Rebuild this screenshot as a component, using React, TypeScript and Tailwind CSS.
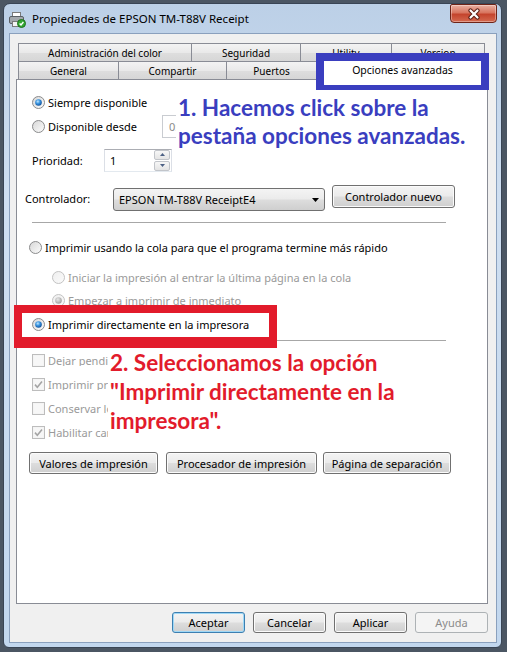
import React from 'react';

const ui = "font-['Noto_Sans',sans-serif] text-[11px] leading-none";
const btnBg =
  'bg-[linear-gradient(to_bottom,#f4f4f4_0%,#ebebeb_48%,#dddddd_52%,#cfcfcf_100%)]';

function Radio({ checked = false, disabled = false }: { checked?: boolean; disabled?: boolean }) {
  return (
    <svg width="13" height="13" viewBox="0 0 13 13" className="shrink-0">
      <circle
        cx="6.5"
        cy="6.5"
        r="6"
        fill={disabled ? 'url(#rbgd)' : 'url(#rbg)'}
        stroke={disabled ? '#c2c2c2' : '#8a8b8c'}
      />
      {checked && <circle cx="6.5" cy="6.5" r="3.3" fill={disabled ? 'url(#rdotd)' : 'url(#rdot)'} />}
    </svg>
  );
}

function Check({ checked = false }: { checked?: boolean }) {
  return (
    <svg width="13" height="13" viewBox="0 0 13 13" className="shrink-0">
      <rect x="0.5" y="0.5" width="12" height="12" fill="#f4f4f4" stroke="#bdbdbd" />
      <rect x="2" y="2" width="9" height="9" fill="#f7f7f7" />
      {checked && <path d="M3 6.6 L5.3 9.2 L10 3.4" stroke="#a5a5a5" strokeWidth="1.6" fill="none" />}
    </svg>
  );
}

function Btn({
  children,
  w,
  focused = false,
  disabled = false,
  h = 'h-[22px]',
}: {
  children: React.ReactNode;
  w: string;
  focused?: boolean;
  disabled?: boolean;
  h?: string;
}) {
  const look = disabled
    ? 'border-[#adb2b5] bg-[#f4f4f4] text-[#8b8b8b]'
    : focused
      ? `border-[#3c7fb1] shadow-[inset_0_0_0_1px_#9fd8f6] ${btnBg} text-black`
      : `border-[#707070] shadow-[inset_0_0_0_1px_#fbfbfb] ${btnBg} text-black`;
  return (
    <div className={`${w} ${h} shrink-0 rounded-[3px] border ${look} flex items-center justify-center ${ui}`}>
      {children}
    </div>
  );
}

function Tab({ label, w, first = false }: { label: string; w: string; first?: boolean }) {
  return (
    <div
      className={`${w} h-[18px] ${first ? '' : '-ml-px'} border-x border-t border-[#898c95] bg-[linear-gradient(to_bottom,#f3f3f3,#e9e9e9_50%,#dedede_51%,#d6d6d6)] flex items-center justify-center font-['Noto_Sans',sans-serif] text-[10px] leading-none text-black`}
    >
      {label}
    </div>
  );
}

function PrinterIcon() {
  return (
    <svg width="17" height="16" viewBox="0 0 17 16" className="mt-[3px] shrink-0">
      <rect x="3.5" y="0.5" width="8" height="5" fill="#fff" stroke="#7a7a7a" />
      <rect x="0.5" y="4.5" width="14" height="7" rx="1.5" fill="#a4a9ae" stroke="#5b6066" />
      <rect x="3.5" y="9.5" width="8" height="5" fill="#f4f4f4" stroke="#7a7a7a" />
      <circle cx="12.5" cy="11.5" r="4" fill="#32a832" stroke="#1d6f1d" />
      <path d="M10.6 11.4 L12 12.9 L14.4 10" stroke="#fff" strokeWidth="1.4" fill="none" />
    </svg>
  );
}

function CloseButton() {
  return (
    <div className="absolute right-[4px] top-0 w-[47px] h-[19px] rounded-b-[4px] rounded-t-[2px] border border-[#6e2418] bg-[linear-gradient(to_bottom,#eab0a2,#d8755f_45%,#c4442d_55%,#d46a50)] shadow-[inset_0_0_0_1px_rgba(255,255,255,0.35)] flex items-center justify-center">
      <svg width="14" height="12" viewBox="0 0 14 12">
        <path d="M3.5 2.5 L10.5 9.5 M10.5 2.5 L3.5 9.5" stroke="#5a1d14" strokeWidth="4.2" strokeLinecap="round" />
        <path d="M3.5 2.5 L10.5 9.5 M10.5 2.5 L3.5 9.5" stroke="#fff" strokeWidth="2.2" strokeLinecap="round" />
      </svg>
    </div>
  );
}

export default function App() {
  return (
    <div className="relative w-[507px] h-[652px] overflow-hidden bg-[#4b5663]">
      <svg className="absolute w-0 h-0">
        <defs>
          <linearGradient id="rbg" x1="0" y1="0" x2="1" y2="1">
            <stop offset="0" stopColor="#d6d6d6" />
            <stop offset="1" stopColor="#fdfdfd" />
          </linearGradient>
          <linearGradient id="rbgd" x1="0" y1="0" x2="1" y2="1">
            <stop offset="0" stopColor="#eeeeee" />
            <stop offset="1" stopColor="#fbfbfb" />
          </linearGradient>
          <radialGradient id="rdot" cx="0.4" cy="0.35" r="0.7">
            <stop offset="0" stopColor="#bfe7ff" />
            <stop offset="0.45" stopColor="#3a95e0" />
            <stop offset="1" stopColor="#0c4a94" />
          </radialGradient>
          <radialGradient id="rdotd" cx="0.4" cy="0.35" r="0.7">
            <stop offset="0" stopColor="#e8e8e8" />
            <stop offset="1" stopColor="#9c9c9c" />
          </radialGradient>
        </defs>
      </svg>

      {/* Window */}
      <div className="ml-[3px] mt-[3px] w-[499px] h-[645px] rounded-t-[7px] rounded-b-[6px] border border-[#394555] bg-[linear-gradient(to_bottom,#bcd0e7,#cfdff1_30%,#c2d7ee)] flex flex-col">
        {/* Title bar */}
        <div className="relative h-[29px] shrink-0 flex items-center pl-[5px]">
          <PrinterIcon />
          <span className="ml-[6px] font-['Noto_Sans',sans-serif] text-[11.5px] leading-none text-black">
            Propiedades de EPSON TM-T88V Receipt
          </span>
          <CloseButton />
        </div>

        {/* Client area */}
        <div className="ml-[5px] mr-[4px] h-[610px] border border-[#8aa0bd] bg-[#f0f0f0] flex flex-col">
          {/* Tabs */}
          <div className="ml-[8px] mt-[9px] flex flex-col">
            <div className="flex">
              <Tab first label="Administración del color" w="w-[174px]" />
              <Tab label="Seguridad" w="w-[110px]" />
              <Tab label="Utility" w="w-[92px]" />
              <Tab label="Version" w="w-[94px]" />
            </div>
            <div className="flex items-start h-[18px]">
              <Tab first label="General" w="w-[101px]" />
              <Tab label="Compartir" w="w-[109px]" />
              <Tab label="Puertos" w="w-[91px]" />
              <div className="relative z-10 -ml-px -mt-[2px] w-[173px] h-[21px] border-x border-t border-[#898c95] bg-white flex items-center justify-center font-['Noto_Sans',sans-serif] text-[10.5px] leading-none text-black">
                Opciones avanzadas
              </div>
            </div>
          </div>

          {/* Panel */}
          <div className={`ml-[6px] w-[472px] h-[525px] shrink-0 border border-[#898c95] bg-white flex flex-col ${ui} text-black`}>
            <div className="mt-[12px] h-[20px] ml-[15px] flex items-center gap-[3px]">
              <Radio checked />
              <span>Siempre disponible</span>
            </div>
            <div className="mt-[2px] h-[24px] ml-[15px] flex items-center">
              <Radio />
              <span className="ml-[3px] w-[114px]">Disponible desde</span>
              <div className="w-[14px] h-[23px] border border-r-0 border-[#c9ccd1] bg-white flex items-center pl-[6px] text-[#8a8a8a] overflow-hidden">
                0:
              </div>
            </div>
            <div className="mt-[10px] h-[24px] ml-[15px] flex items-center">
              <span className="w-[72px]">Prioridad:</span>
              <div className="w-[68px] h-[23px] border border-[#abadb3] border-x-[#dbdfe6] border-b-[#e3e9ef] bg-white flex items-center">
                <span className="flex-1 pl-[5px]">1</span>
                <div className="mr-px w-[16px] h-[21px] flex flex-col gap-px">
                  {[0, 1].map((i) => (
                    <div
                      key={i}
                      className="flex-1 rounded-[2px] border border-[#c2c5ca] bg-[linear-gradient(to_bottom,#f7f7f7,#e4e4e4)] flex items-center justify-center"
                    >
                      <svg width="5" height="3" viewBox="0 0 5 3">
                        <path d={i === 0 ? 'M0 3 L2.5 0 L5 3 Z' : 'M0 0 L2.5 3 L5 0 Z'} fill="#4d6185" />
                      </svg>
                    </div>
                  ))}
                </div>
              </div>
            </div>
            <div className="mt-[13px] h-[26px] ml-[8px] flex items-start">
              <span className="w-[88px] h-[26px] flex items-center">Controlador:</span>
              <div className={`mt-[3px] w-[212px] h-[23px] rounded-[3px] border border-[#707070] ${btnBg} flex items-center pl-[5px] pr-[5px]`}>
                <span className="flex-1">EPSON TM-T88V ReceiptE4</span>
                <svg width="7" height="4" viewBox="0 0 7 4">
                  <path d="M0 0 L7 0 L3.5 4 Z" fill="#000" />
                </svg>
              </div>
              <div className="ml-[7px]">
                <Btn w="w-[123px]" h="h-[23px]">
                  Controlador nuevo
                </Btn>
              </div>
            </div>
            <div className="mt-[11px] ml-[15px] w-[414px] h-px bg-[#a7a7a7]" />

            <div className="mt-[14px] h-[20px] ml-[12px] flex items-center gap-[3px]">
              <Radio />
              <span>Imprimir usando la cola para que el programa termine más rápido</span>
            </div>
            <div className="mt-[10px] h-[20px] ml-[35px] flex items-center gap-[3px] text-[#9a9a9a]">
              <Radio disabled />
              <span>Iniciar la impresión al entrar la última página en la cola</span>
            </div>
            <div className="mt-[3px] h-[20px] ml-[35px] flex items-center gap-[3px] text-[#9a9a9a]">
              <Radio disabled checked />
              <span>Empezar a imprimir de inmediato</span>
            </div>
            <div className="mt-[4px] h-[20px] ml-[15px] flex items-center gap-[3px]">
              <Radio checked />
              <span>Imprimir directamente en la impresora</span>
            </div>
            <div className="mt-[6px] ml-[13px] w-[416px] h-px bg-[#a7a7a7]" />

            {/* labels run under the annotation, so they are clipped where it starts */}
            {[
              ['Dejar pendientes los documentos no coincidentes', false],
              ['Imprimir primero los documentos en cola', true],
              ['Conservar los documentos impresos', false],
              ['Habilitar características de impresión avanzadas', true],
            ].map(([label, checked], i) => (
              <div
                key={i}
                className={`${i === 0 ? 'mt-[9px]' : 'mt-[4px]'} h-[20px] ml-[15px] flex items-center gap-[3px] text-[#9a9a9a]`}
              >
                <Check checked={checked as boolean} />
                <span className="w-[60px] overflow-hidden whitespace-nowrap">{label as string}</span>
              </div>
            ))}

            <div className="mt-[10px] ml-[12px] flex">
              <Btn w="w-[129px]">Valores de impresión</Btn>
              <div className="ml-[8px]">
                <Btn w="w-[151px]">Procesador de impresión</Btn>
              </div>
              <div className="ml-[6px]">
                <Btn w="w-[128px]">Página de separación</Btn>
              </div>
            </div>
          </div>

          {/* Dialog buttons */}
          <div className="mt-[8px] mr-[8px] flex justify-end gap-2">
            <Btn w="w-[73px]" h="h-[21px]" focused>
              Aceptar
            </Btn>
            <Btn w="w-[73px]" h="h-[21px]">
              Cancelar
            </Btn>
            <Btn w="w-[73px]" h="h-[21px]">
              Aplicar
            </Btn>
            <Btn w="w-[73px]" h="h-[21px]" disabled>
              Ayuda
            </Btn>
          </div>
        </div>
      </div>

      {/* Annotation 1 */}
      <div className="absolute left-[316px] top-[53px] w-[173px] h-[37px] border-x-[8px] border-t-[8px] border-b-[5px] border-[#3a3ebf] z-20" />
      <div className="absolute left-[176px] top-[93px] w-[300px] h-[58px] bg-white pl-[2px] pt-[1px] font-['Lato',sans-serif] font-bold text-[22.5px] leading-[28px] text-[#3a3ebf] z-20">
        <div>1. Hacemos click sobre la</div>
        <div>pestaña opciones avanzadas.</div>
      </div>

      {/* Annotation 2 */}
      <div className="absolute left-[14px] top-[305px] w-[263px] h-[43px] border-[8px] border-b-[11px] border-[#e21b2b] z-20" />
      <div className="absolute left-[108px] top-[348px] w-[320px] h-[92px] bg-white pl-[2px] font-['Lato',sans-serif] font-bold text-[22.5px] leading-[29px] text-[#e21b2b] z-20">
        <div>2. Seleccionamos la opción</div>
        <div>"Imprimir directamente en la</div>
        <div>impresora".</div>
      </div>
    </div>
  );
}
